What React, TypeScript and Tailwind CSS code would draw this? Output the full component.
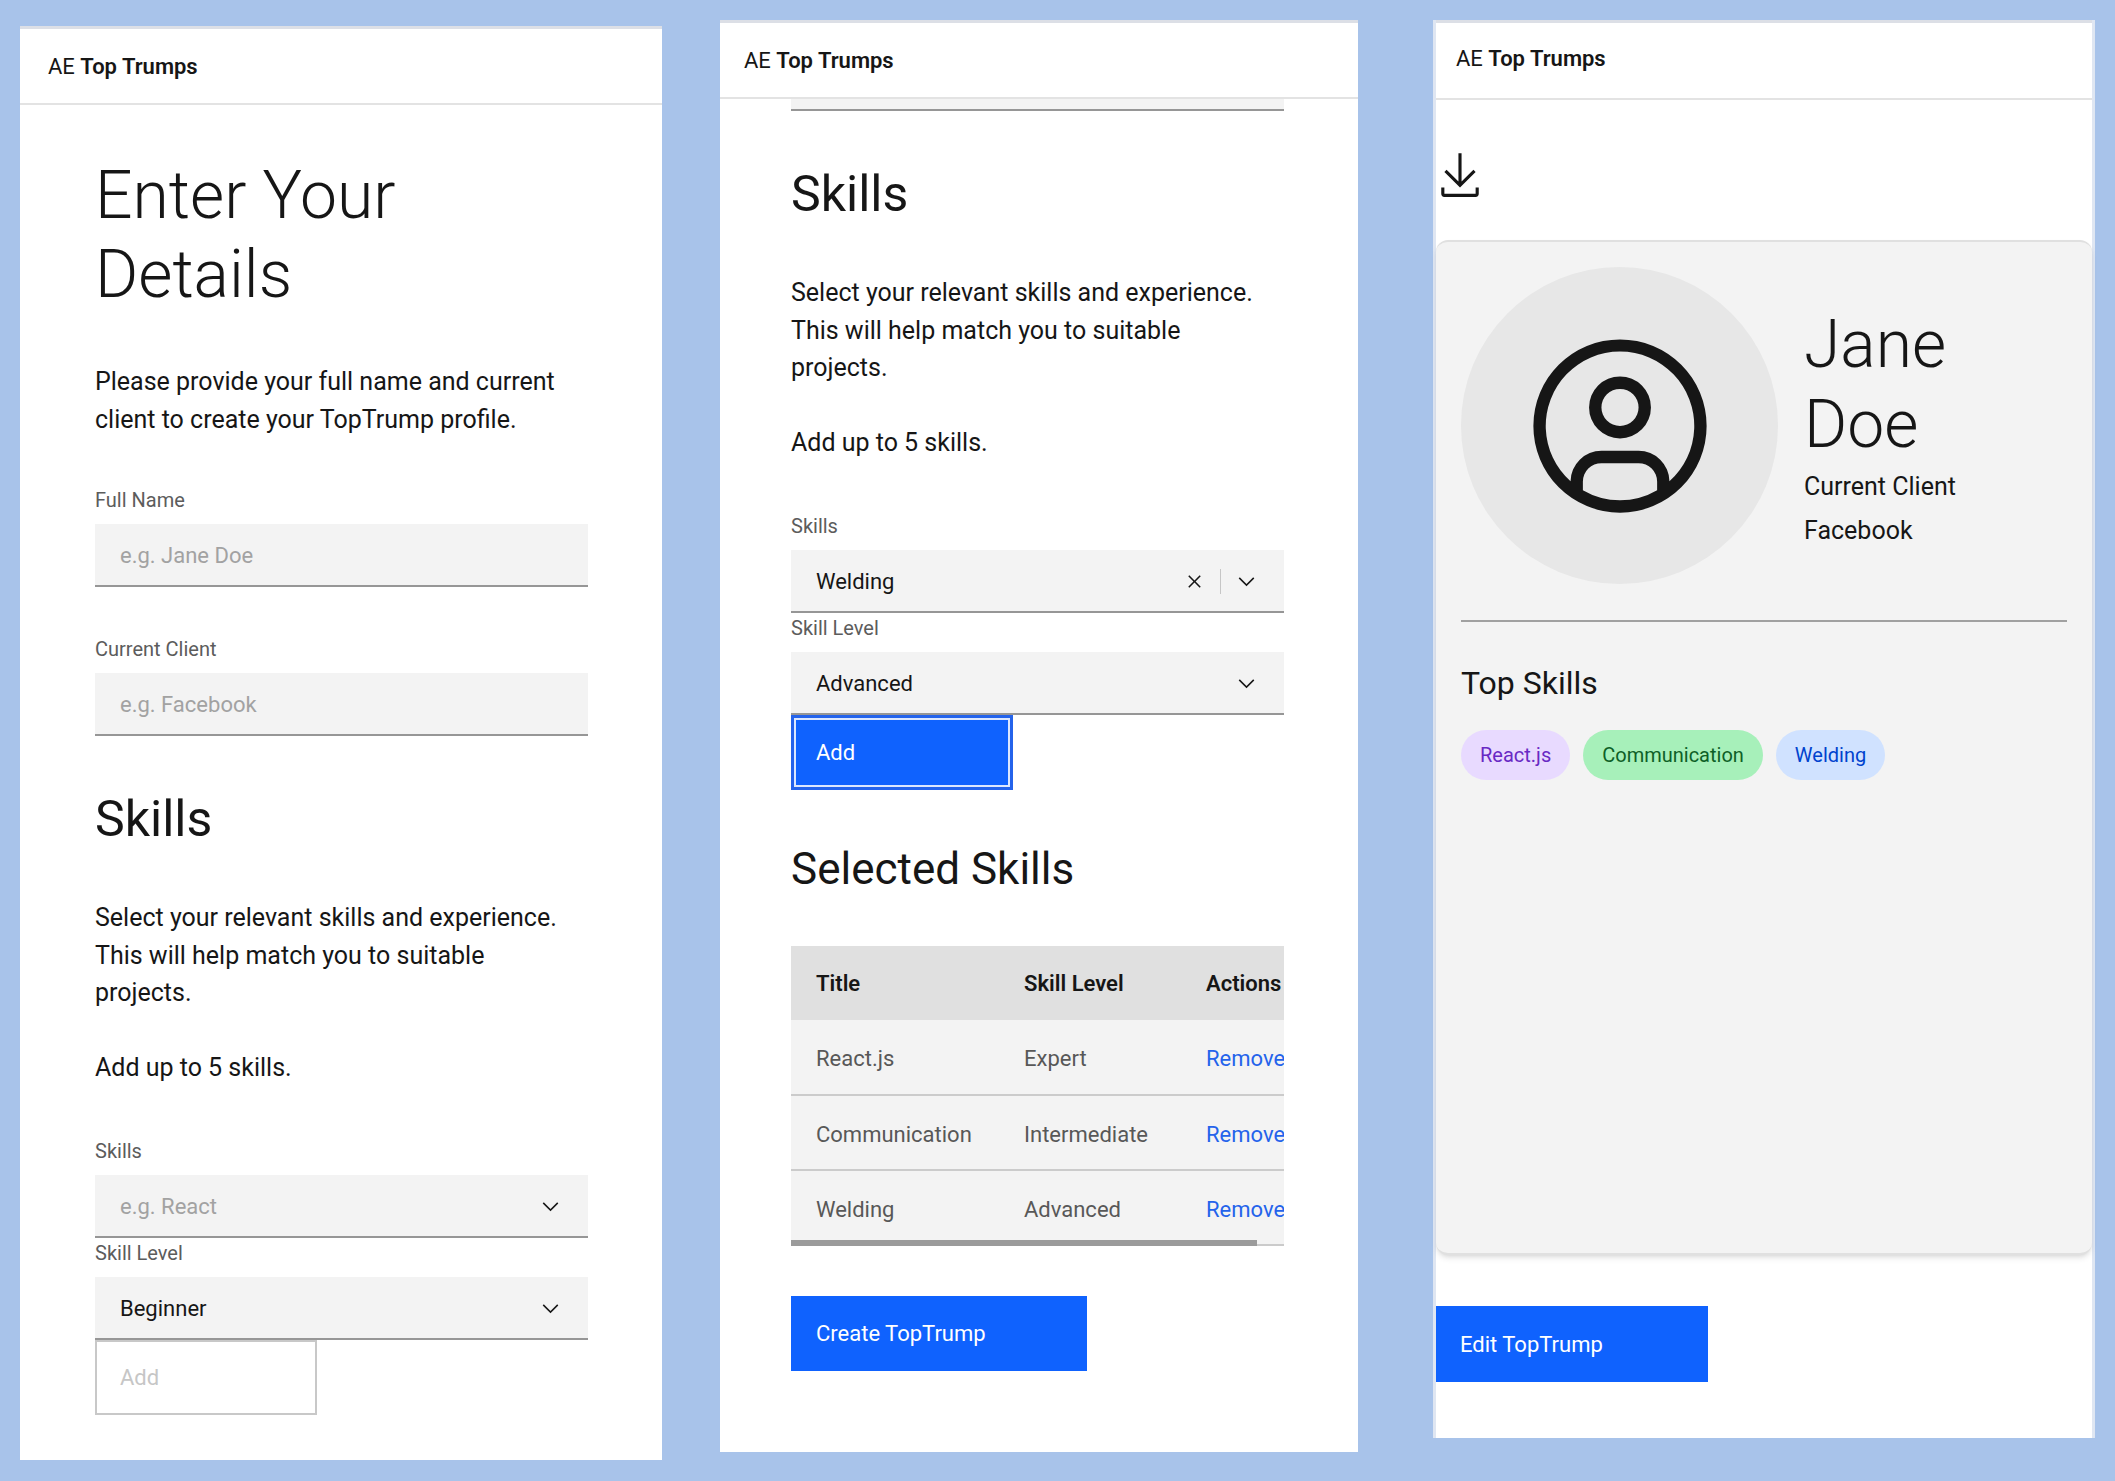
import { useState, type ReactNode } from "react";

const FIELD =
  "block h-[63px] w-full appearance-none rounded-none border-b-2 border-[#969696] bg-[#f3f3f3] px-[25px] pt-0.5 text-[22px] text-[#161616] outline-none placeholder:text-[#a2a2a2] placeholder:opacity-100";

function ChevronDown() {
  return (
    <svg viewBox="0 0 16 16" className="size-[25px]" fill="#161616" aria-hidden="true">
      <path d="M8 11 3 6l.7-.7L8 9.6l4.3-4.3.7.7z" />
    </svg>
  );
}

function Close() {
  return (
    <svg viewBox="0 0 16 16" className="size-[25px]" fill="#161616" aria-hidden="true">
      <path d="M12 4.7 11.3 4 8 7.3 4.7 4 4 4.7 7.3 8 4 11.3l.7.7L8 8.7l3.3 3.3.7-.7L8.7 8z" />
    </svg>
  );
}

function Download() {
  return (
    <svg viewBox="2 0 28 32" className="h-[50px] w-[44px]" fill="#161616" aria-hidden="true">
      <path d="M26 24v4H6v-4H4v4a2 2 0 0 0 2 2h20a2 2 0 0 0 2-2v-4zM26 14l-1.41-1.41L17 20.17V2h-2v18.17l-7.59-7.58L6 14l10 10z" />
    </svg>
  );
}

function UserAvatar() {
  return (
    <svg viewBox="0 0 32 32" className="size-[198px]" fill="#161616" aria-hidden="true">
      <path d="M16 8a5 5 0 1 0 5 5 5 5 0 0 0-5-5m0 8a3 3 0 1 1 3-3 3 3 0 0 1-3 3" />
      <path d="M16 2a14 14 0 1 0 14 14A14 14 0 0 0 16 2m-6 24.3765V25a3.0033 3.0033 0 0 1 3-3h6a3.0033 3.0033 0 0 1 3 3v1.3765a11.8989 11.8989 0 0 1-12 0m13.9925-1.4507A5.0016 5.0016 0 0 0 19 20h-6a5.0016 5.0016 0 0 0-4.9925 4.9258 12 12 0 1 1 15.985 0" />
    </svg>
  );
}

function Header({ className }: { className: string }) {
  return (
    <header
      className={`flex items-center border-t-[3px] border-b-2 border-t-[#dcdfe6] border-b-[#e3e3e3] text-[22px] ${className}`}
    >
      <p>
        AE <span className="font-semibold">Top Trumps</span>
      </p>
    </header>
  );
}

function Label({ htmlFor, children }: { htmlFor: string; children: ReactNode }) {
  return (
    <label htmlFor={htmlFor} className="mb-3 block text-[20px] leading-[24px] text-[#5c5c5c]">
      {children}
    </label>
  );
}

function TextField({ id, label, placeholder }: { id: string; label: string; placeholder: string }) {
  return (
    <div className="mt-[50px]">
      <Label htmlFor={id}>{label}</Label>
      <input id={id} type="text" placeholder={placeholder} className={FIELD} />
    </div>
  );
}

function SkillPicker({ id, initial }: { id: string; initial: string }) {
  const [value, setValue] = useState(initial);
  return (
    <div className="mt-[52px]">
      <Label htmlFor={id}>Skills</Label>
      <div className="relative">
        <input
          id={id}
          type="text"
          role="combobox"
          aria-expanded="false"
          aria-controls={`${id}-list`}
          placeholder="e.g. React"
          value={value}
          onChange={(e) => setValue(e.target.value)}
          className={FIELD}
        />
        <div className="absolute inset-y-0 right-[25px] flex items-center">
          {value !== "" && (
            <>
              <button type="button" aria-label="Clear selection" onClick={() => setValue("")}>
                <Close />
              </button>
              <span className="mx-[13px] h-[25px] w-px bg-[#c6c6c6]" />
            </>
          )}
          <button type="button" aria-label="Open menu">
            <ChevronDown />
          </button>
        </div>
      </div>
    </div>
  );
}

function LevelSelect({ id, initial }: { id: string; initial: string }) {
  return (
    <div className="mt-[3px]">
      <Label htmlFor={id}>Skill Level</Label>
      <div className="relative">
        <select id={id} defaultValue={initial} className={FIELD}>
          <option>Beginner</option>
          <option>Intermediate</option>
          <option>Advanced</option>
          <option>Expert</option>
        </select>
        <div className="pointer-events-none absolute inset-y-0 right-[25px] flex items-center">
          <ChevronDown />
        </div>
      </div>
    </div>
  );
}

function SkillsIntro() {
  return (
    <>
      <h2 className="mt-[52px] text-[50px] leading-[62px]">Skills</h2>
      <p className="mt-[49px] pr-4 text-[25px] leading-normal">
        Select your relevant skills and experience. This will help match you to suitable projects.
        <br />
        <br />
        Add up to 5 skills.
      </p>
    </>
  );
}

function DetailsScreen() {
  return (
    <section className="mt-1.5 min-w-0 flex-[642_1_0%] bg-white">
      <Header className="h-[79px] pl-[28px]" />
      <form className="pt-[51px] pr-[74px] pb-[45px] pl-[75px]" onSubmit={(e) => e.preventDefault()}>
        <h1 className="text-[66px] leading-[79px] font-light">
          Enter Your
          <br />
          Details
        </h1>
        <p className="mt-[49px] pr-4 text-[25px] leading-normal">
          Please provide your full name and current client to create your TopTrump profile.
        </p>
        <TextField id="full-name" label="Full Name" placeholder="e.g. Jane Doe" />
        <TextField id="current-client" label="Current Client" placeholder="e.g. Facebook" />
        <SkillsIntro />
        <SkillPicker id="skill-empty" initial="" />
        <LevelSelect id="level-empty" initial="Beginner" />
        <button
          type="submit"
          disabled
          className="block h-[75px] w-[222px] border-2 border-[#c8c8c8] px-[23px] text-left text-[22px] text-[#c6c6c6]"
        >
          Add
        </button>
      </form>
    </section>
  );
}

const SKILLS = [
  { title: "React.js", level: "Expert", tag: "bg-[#e8daff] text-[#6929c4]" },
  { title: "Communication", level: "Intermediate", tag: "bg-[#a7f0ba] text-[#0e6027]" },
  { title: "Welding", level: "Advanced", tag: "bg-[#d0e2ff] text-[#0043ce]" },
];

function SkillsScreen() {
  return (
    <section className="ml-[58px] min-w-0 flex-[638_1_0%] bg-white">
      <Header className="h-[79px] pl-[24px]" />
      <form className="pr-[74px] pb-[81px] pl-[71px]" onSubmit={(e) => e.preventDefault()}>
        <div className="flex h-3 flex-col justify-end overflow-hidden">
          <input type="text" aria-label="Current Client" className={`${FIELD} shrink-0`} />
        </div>
        <SkillsIntro />
        <SkillPicker id="skill-filled" initial="Welding" />
        <LevelSelect id="level-filled" initial="Advanced" />
        <button
          type="submit"
          className="block h-[75px] w-[222px] border-[3px] border-[#2463eb] bg-[#0f62fe] px-[22px] text-left text-[22px] text-white inset-ring-2 inset-ring-[#dbe7ff]"
        >
          Add
        </button>
        <h3 className="mt-[52px] text-[44px] leading-[54px]">Selected Skills</h3>
        <div className="relative mt-[50px] overflow-hidden">
          <table className="w-[522px] table-fixed border-collapse text-left text-[22px]">
            <colgroup>
              <col className="w-[208px]" />
              <col className="w-[182px]" />
              <col />
            </colgroup>
            <thead>
              <tr className="h-[74px] bg-[#e0e0e0]">
                <th className="pt-0.5 pl-[25px] font-semibold">Title</th>
                <th className="pt-0.5 pl-[25px] font-semibold">Skill Level</th>
                <th className="pt-0.5 pl-[25px] font-semibold">Actions</th>
              </tr>
            </thead>
            <tbody>
              {SKILLS.map((s) => (
                <tr key={s.title} className="h-[75px] border-b-2 border-[#cbcbcb] bg-[#f3f3f3] text-[#585858]">
                  <td className="pt-1 pl-[25px]">{s.title}</td>
                  <td className="pt-1 pl-[25px]">{s.level}</td>
                  <td className="pt-1 pl-[25px]">
                    <a href="#remove" className="text-[#2463eb]">
                      Remove
                    </a>
                  </td>
                </tr>
              ))}
            </tbody>
          </table>
          <div className="absolute bottom-0 left-0 h-[6px] w-[466px] bg-[#9b9b9b]" />
        </div>
        <button type="button" className="mt-[50px] block h-[75px] w-[296px] bg-[#0f62fe] px-[25px] text-left text-[22px] text-white">
          Create TopTrump
        </button>
      </form>
    </section>
  );
}

function CardScreen() {
  return (
    <section className="ml-[75px] min-w-0 flex-[656_1_0%] border-x-[3px] border-[#dfe6f2] bg-white">
      <Header className="h-[80px] pl-[20px] pb-1" />
      <main className="pt-[50px] pb-[56px]">
        <button type="button" aria-label="Download card" className="ml-0.5 block">
          <Download />
        </button>
        <article className="mt-[40px] h-[1015px] rounded-xl border-y-2 border-[#e0e0e0] bg-[#f3f3f3] px-[25px] pt-[25px] shadow-md">
          <div className="flex items-center">
            <div className="flex size-[317px] shrink-0 items-center justify-center rounded-full bg-[#e7e7e7]">
              <UserAvatar />
            </div>
            <div className="ml-[26px] pt-1">
              <h1 className="pt-0.5 text-[66px] leading-[80px] font-light">
                Jane
                <br />
                Doe
              </h1>
              <p className="text-[25px] leading-[44px]">Current Client</p>
              <p className="text-[25px] leading-[44px]">Facebook</p>
            </div>
          </div>
          <hr className="mt-[36px] border-t-2 border-[#a0a0a0]" />
          <h2 className="mt-[40px] text-[32px] leading-[42px]">Top Skills</h2>
          <ul className="mt-[26px] flex gap-[13px]">
            {SKILLS.map((s) => (
              <li key={s.title} className={`flex h-[50px] items-center rounded-full px-[19px] text-[20px] ${s.tag}`}>
                {s.title}
              </li>
            ))}
          </ul>
        </article>
        <button type="button" className="mt-[51px] block h-[76px] w-[272px] bg-[#0f62fe] px-[24px] text-left text-[22px] text-white">
          Edit TopTrump
        </button>
      </main>
    </section>
  );
}

export default function App() {
  return (
    <div className="flex min-h-screen items-start bg-[#a8c3ea] px-5 pt-5 font-['Roboto',sans-serif] text-[#161616]">
      <DetailsScreen />
      <SkillsScreen />
      <CardScreen />
    </div>
  );
}
